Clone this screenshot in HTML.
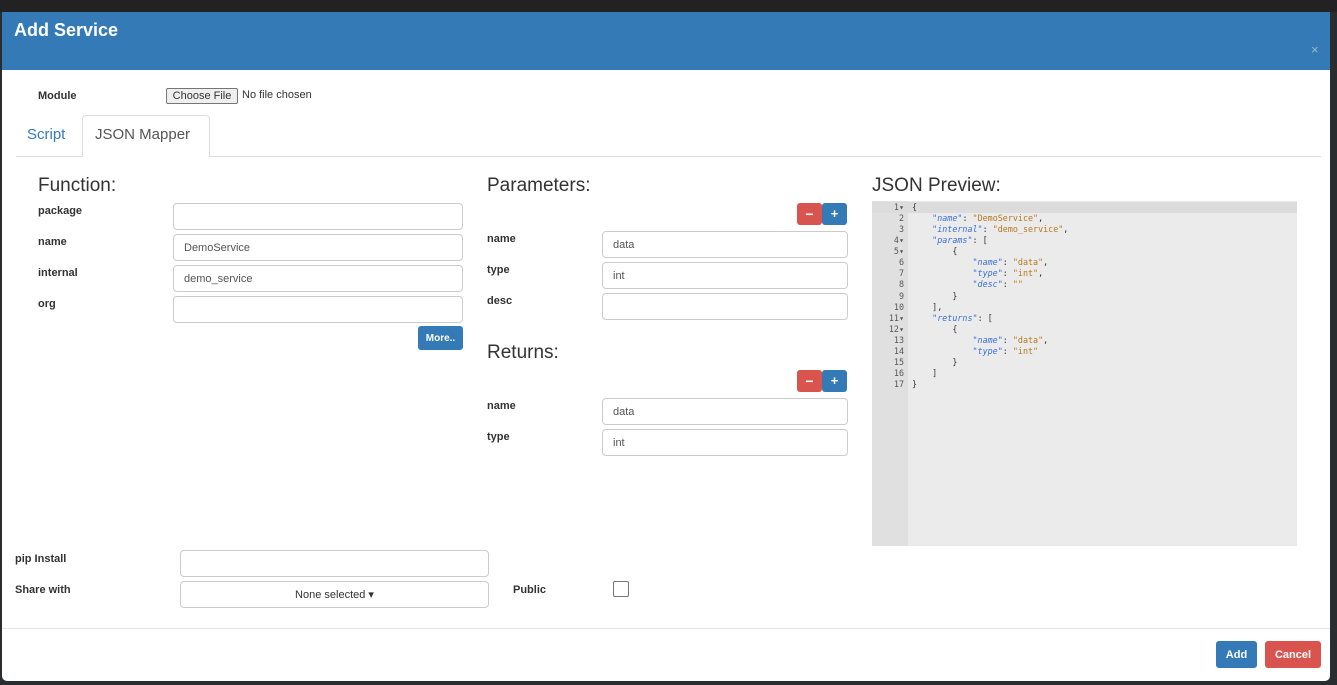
<!DOCTYPE html>
<html><head><style>
*{box-sizing:border-box;margin:0;padding:0}
body{width:1337px;height:685px;overflow:hidden;background:#2a2d30;font-family:"Liberation Sans",sans-serif;position:relative;color:#333}
.a{position:absolute}
.modal{left:2px;top:12px;width:1328px;height:669px;background:#fff;border-radius:0 0 5px 5px}
.hdr{left:2px;top:12px;width:1328px;height:58px;background:#337ab7}
.lbl{font-size:11px;font-weight:bold;color:#333}
.inp{border:1px solid #ccc;border-radius:4px;background:#fff;font-size:11px;color:#555;padding-left:10px;line-height:27px;height:27px}
.h{font-size:19px;color:#333}
.btn{border-radius:3px;color:#fff;font-size:11px;font-weight:bold;text-align:center}
.code{font-family:"DejaVu Sans Mono","Liberation Mono",monospace;font-size:8.4px;line-height:11.06px;white-space:pre}
.k{color:#3a6fd8;font-style:italic}.s{color:#b5781b}
</style></head><body>
<div class="a" style="left:0;top:0;width:1337px;height:12px;background:#222"></div>
<div class="a modal"></div>
<div class="a hdr"></div>
<div class="a" style="left:14px;top:20px;color:#fff;font-size:18px;font-weight:bold">Add Service</div>
<div class="a" style="left:1311px;top:42px;color:#9bb;font-size:13px">×</div>
<div class="a lbl" style="left:38px;top:90px">Module</div>
<div class="a" style="left:166px;top:88px;width:72px;height:16px;border:1px solid #767676;background:#efefef;font-size:11px;text-align:center;line-height:14px;border-radius:2px">Choose File</div>
<div class="a" style="left:242px;top:89px;font-size:11px">No file chosen</div>
<div class="a" style="left:16px;top:156px;width:1305px;height:1px;background:#ddd"></div>
<div class="a" style="left:27px;top:126px;font-size:15px;color:#337ab7">Script</div>
<div class="a" style="left:82px;top:115px;width:128px;height:42px;border:1px solid #ddd;border-bottom:none;border-radius:4px 4px 0 0;background:#fff"></div>
<div class="a" style="left:95px;top:126px;font-size:15px;color:#555">JSON Mapper</div>

<div class="a h" style="left:38px;top:175px">Function:</div>
<div class="a lbl" style="left:38px;top:205px">package</div>
<div class="a lbl" style="left:38px;top:236px">name</div>
<div class="a lbl" style="left:38px;top:267px">internal</div>
<div class="a lbl" style="left:38px;top:298px">org</div>
<div class="a inp" style="left:173px;top:203px;width:290px"></div>
<div class="a inp" style="left:173px;top:234px;width:290px">DemoService</div>
<div class="a inp" style="left:173px;top:265px;width:290px">demo_service</div>
<div class="a inp" style="left:173px;top:296px;width:290px"></div>
<div class="a btn" style="left:418px;top:326px;width:45px;height:24px;background:#337ab7;line-height:25px;font-size:10px">More..</div>

<div class="a h" style="left:487px;top:175px">Parameters:</div>
<div class="a btn" style="left:797px;top:203px;width:25px;height:22px;background:#d9534f;line-height:22px;font-size:14px">−</div>
<div class="a btn" style="left:822px;top:203px;width:25px;height:22px;background:#337ab7;line-height:22px;font-size:13px">+</div>
<div class="a lbl" style="left:487px;top:233px">name</div>
<div class="a lbl" style="left:487px;top:264px">type</div>
<div class="a lbl" style="left:487px;top:295px">desc</div>
<div class="a inp" style="left:602px;top:231px;width:246px">data</div>
<div class="a inp" style="left:602px;top:262px;width:246px">int</div>
<div class="a inp" style="left:602px;top:293px;width:246px"></div>
<div class="a h" style="left:487px;top:342px">Returns:</div>
<div class="a btn" style="left:797px;top:370px;width:25px;height:22px;background:#d9534f;line-height:22px;font-size:14px">−</div>
<div class="a btn" style="left:822px;top:370px;width:25px;height:22px;background:#337ab7;line-height:22px;font-size:13px">+</div>
<div class="a lbl" style="left:487px;top:400px">name</div>
<div class="a lbl" style="left:487px;top:431px">type</div>
<div class="a inp" style="left:602px;top:398px;width:246px">data</div>
<div class="a inp" style="left:602px;top:429px;width:246px">int</div>

<div class="a h" style="left:872px;top:175px">JSON Preview:</div>
<div class="a" style="left:872px;top:201px;width:425px;height:345px;background:#ebebeb"></div>
<div class="a" style="left:872px;top:201px;width:36px;height:345px;background:#e0e0e0"></div>
<div class="a" style="left:872px;top:202px;width:425px;height:11px;background:#dcdcdc"></div>
<div class="a code" style="left:872px;top:202px;width:32px;text-align:right;color:#555">1▾
2
3
4▾
5▾
6
7
8
9
10
11▾
12▾
13
14
15
16
17</div>
<div class="a code" style="left:912px;top:202px;color:#333">{
    <span class="k">"name"</span>: <span class="s">"DemoService"</span>,
    <span class="k">"internal"</span>: <span class="s">"demo_service"</span>,
    <span class="k">"params"</span>: [
        {
            <span class="k">"name"</span>: <span class="s">"data"</span>,
            <span class="k">"type"</span>: <span class="s">"int"</span>,
            <span class="k">"desc"</span>: <span class="s">""</span>
        }
    ],
    <span class="k">"returns"</span>: [
        {
            <span class="k">"name"</span>: <span class="s">"data"</span>,
            <span class="k">"type"</span>: <span class="s">"int"</span>
        }
    ]
}</div>

<div class="a lbl" style="left:15px;top:553px">pip Install</div>
<div class="a lbl" style="left:15px;top:584px">Share with</div>
<div class="a inp" style="left:180px;top:550px;width:309px"></div>
<div class="a inp" style="left:180px;top:581px;width:309px;text-align:center;padding:0;color:#333">None selected ▾</div>
<div class="a lbl" style="left:513px;top:584px">Public</div>
<div class="a" style="left:613px;top:581px;width:16px;height:16px;border:1px solid #767676;border-radius:2px"></div>
<div class="a" style="left:2px;top:628px;width:1328px;height:1px;background:#e5e5e5"></div>
<div class="a btn" style="left:1216px;top:641px;width:41px;height:27px;background:#337ab7;line-height:28px">Add</div>
<div class="a btn" style="left:1265px;top:641px;width:56px;height:27px;background:#d9534f;line-height:28px">Cancel</div>
</body></html>
